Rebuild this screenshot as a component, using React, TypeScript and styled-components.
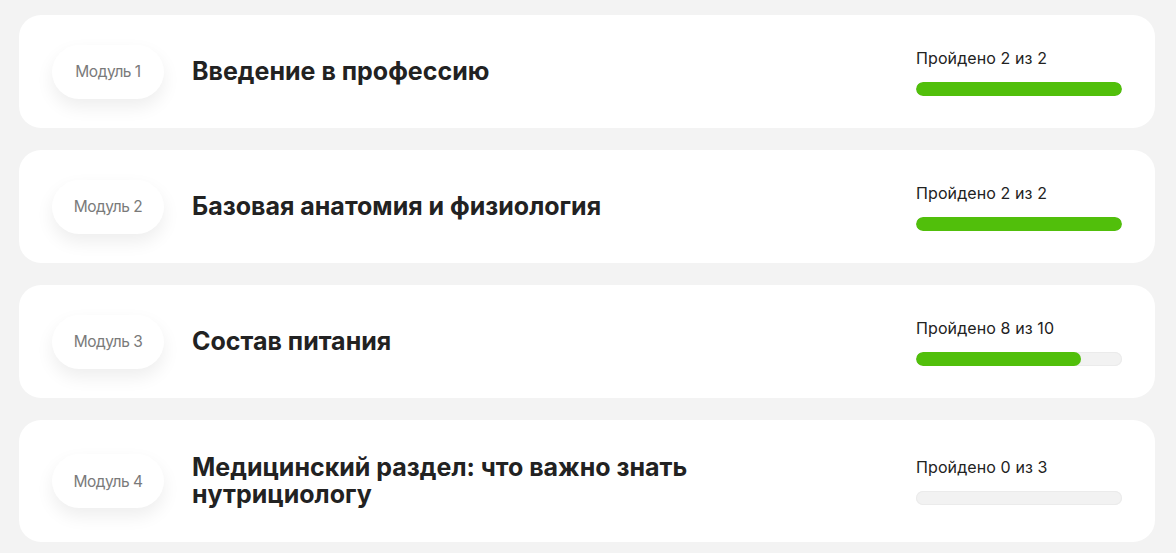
import React from "react";
import styled, { createGlobalStyle } from "styled-components";

const Global = createGlobalStyle`
  html, body { margin: 0; padding: 0; background: #f3f3f3; }
  body { font-family: Inter, "Noto Sans", "Liberation Sans", sans-serif; color: #222; }
`;

const Page = styled.div`
  display: flex;
  flex-direction: column;
  gap: 22px;
  padding: 15px 21px 13px 19px;
  background: #f3f3f3;
`;

const Card = styled.div`
  display: flex;
  align-items: center;
  background: #fff;
  border-radius: 22px;
  padding: 29.5px 33px 29.5px 33px;
`;

const Pill = styled.div`
  flex: none;
  width: 112px;
  height: 54px;
  border-radius: 27px;
  background: #fff;
  box-shadow: 0 8px 18px rgba(0, 0, 0, 0.07);
  display: flex;
  align-items: center;
  justify-content: center;
  font-size: 15.5px;
  letter-spacing: -0.5px;
  color: #7a7a7a;
`;

const Title = styled.div`
  flex: 1;
  margin-left: 28px;
  padding: 4px 0;
  font-size: 25px;
  line-height: 27.5px;
  font-weight: 700;
  letter-spacing: 0;
  color: #222;
  max-width: 520px;
`;

const Progress = styled.div`
  flex: none;
  width: 206px;
  margin-left: auto;
  display: flex;
  flex-direction: column;
  gap: 14px;
`;

const Label = styled.div`
  font-size: 16px;
  line-height: 20px;
  letter-spacing: 0.1px;
  color: #222;
`;

const Track = styled.div`
  height: 14px;
  border-radius: 7px;
  background: #f2f2f2;
  box-shadow: inset 0 0 0 1px #ebebeb;
  overflow: hidden;
`;

const Fill = styled.div`
  height: 100%;
  border-radius: 7px;
  background: #51bf0b;
`;

const modules = [
  { n: 1, title: "Введение в профессию", done: 2, total: 2 },
  { n: 2, title: "Базовая анатомия и физиология", done: 2, total: 2 },
  { n: 3, title: "Состав питания", done: 8, total: 10 },
  { n: 4, title: "Медицинский раздел: что важно знать нутрициологу", done: 0, total: 3 },
];

export default function App() {
  return (
    <>
      <Global />
      <Page>
        {modules.map((m) => (
          <Card key={m.n}>
            <Pill>Модуль {m.n}</Pill>
            <Title>{m.title}</Title>
            <Progress>
              <Label>
                Пройдено {m.done} из {m.total}
              </Label>
              <Track>
                {m.done > 0 && <Fill style={{ width: `${(m.done / m.total) * 100}%` }} />}
              </Track>
            </Progress>
          </Card>
        ))}
      </Page>
    </>
  );
}
